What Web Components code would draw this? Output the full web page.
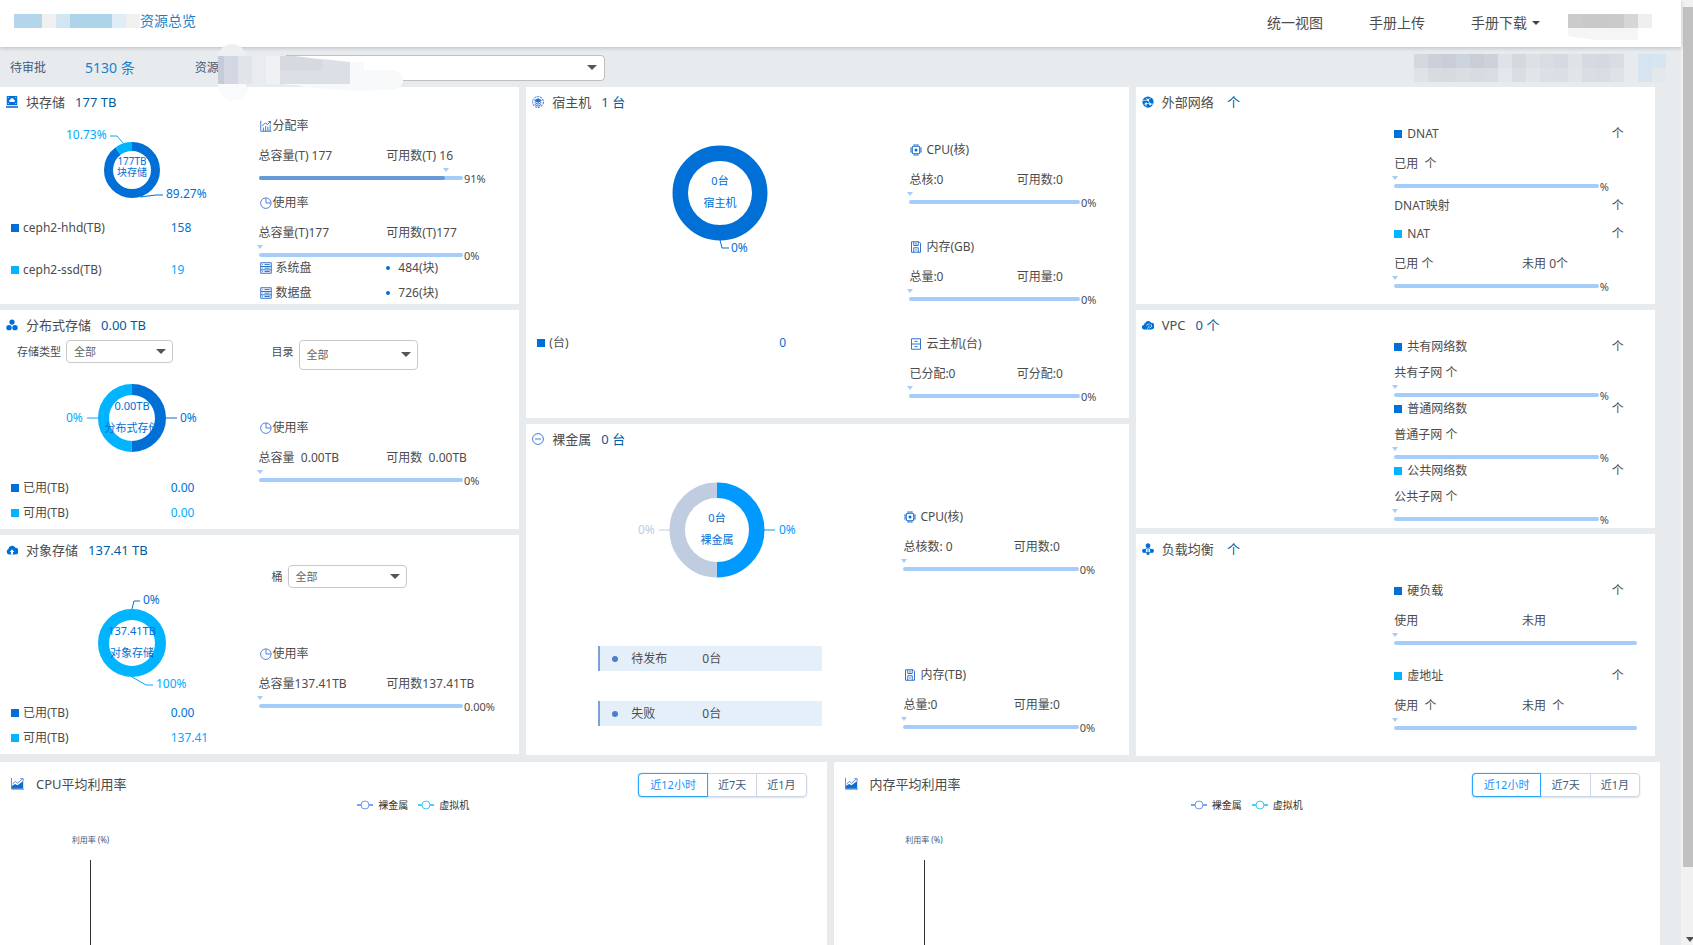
<!DOCTYPE html>
<html lang="zh-CN">
<head>
<meta charset="utf-8">
<title>资源总览</title>
<style>
body{margin:0;background:#e7ebee;color:#4c4c4c;font:12px/20px "Noto Sans","Noto Sans CJK SC",sans-serif}
</style>
</head>
<body>
<app-shell>
  <top-bar slot="top"></top-bar>
  <filter-bar slot="top"></filter-bar>
  <dash-board>
    <dash-column slot="a" class="c1">
      <resource-card icon="disk" name="块存储" value="177 TB">
        <ring-chart slot="left" spec='{"w":260,"h":92,"cx":132,"cy":55,"r":28,"i":19,"fs":10,"seg":[[89.27,"#006fd6"],[10.73,"#00b4ff"]],"mid":[[47,"177TB"],[58,"块存储"]],"lab":[{"x":66,"y":20,"t":"10.73%","c":"#00aaff","p":"M123 28L117 21H110"},{"x":166,"y":79,"t":"89.27%","c":"#006fd6","p":"M140 82L156 80H163"}]}'></ring-chart>
        <legend-row slot="left" class="tall" name="ceph2-hhd(TB)" value="158"></legend-row>
        <legend-row slot="left" class="tall light" name="ceph2-ssd(TB)" value="19"></legend-row>
        <usage-gauge slot="right" icon="chart" name="分配率" a="总容量(T) 177" b="可用数(T) 16" pct="91" unit="91%"></usage-gauge>
        <usage-gauge slot="right" icon="pie" name="使用率" a="总容量(T)177" b="可用数(T)177" unit="0%"></usage-gauge>
        <disk-list slot="right"></disk-list>
      </resource-card>
      <resource-card class="f2" icon="nodes" name="分布式存储" value="0.00 TB">
        <select-field slot="filter-a" class="s" name="存储类型"></select-field>
        <select-field slot="filter-b" class="l" name="目录"></select-field>
        <ring-chart slot="left" spec='{"w":260,"h":105,"cx":132,"cy":48,"r":34,"i":23,"fs":11,"seg":[[50,"#006fd6"],[50,"#00b4ff"]],"mid":[[36,"0.00TB"],[58,"分布式存储"]],"lab":[{"x":66,"y":48,"t":"0%","c":"#00aaff","p":"M98 48H87"},{"x":180,"y":48,"t":"0%","c":"#006fd6","p":"M166 48H177"}]}'></ring-chart>
        <legend-row slot="left" name="已用(TB)" value="0.00"></legend-row>
        <legend-row slot="left" class="light" name="可用(TB)" value="0.00"></legend-row>
        <usage-gauge slot="right" icon="pie" name="使用率" a="总容量  0.00TB" b="可用数  0.00TB" unit="0%"></usage-gauge>
      </resource-card>
      <resource-card class="f3" icon="cloud" name="对象存储" value="137.41 TB">
        <select-field slot="filter-b" class="m" name="桶"></select-field>
        <ring-chart slot="left" spec='{"w":260,"h":105,"cx":132,"cy":48,"r":34,"i":23,"fs":11,"seg":[[100,"#00b4ff"]],"mid":[[36,"137.41TB"],[58,"对象存储"]],"lab":[{"x":143,"y":5,"t":"0%","c":"#006fd6","p":"M132 14L134 6H140"},{"x":156,"y":89,"t":"100%","c":"#00aaff","p":"M132 82L146 90H153"}]}'></ring-chart>
        <legend-row slot="left" name="已用(TB)" value="0.00"></legend-row>
        <legend-row slot="left" class="light" name="可用(TB)" value="137.41"></legend-row>
        <usage-gauge slot="right" icon="pie" name="使用率" a="总容量137.41TB" b="可用数137.41TB" unit="0.00%"></usage-gauge>
      </resource-card>
    </dash-column>
    <dash-column slot="b" class="c2">
      <resource-card class="host" icon="host" name="宿主机" value="1 台">
        <ring-chart slot="left" spec='{"w":380,"h":215,"cx":194,"cy":78,"r":47.5,"i":32,"fs":11,"seg":[[100,"#006fd6"]],"mid":[[66,"0台"],[88,"宿主机"]],"lab":[{"x":205,"y":133,"t":"0%","c":"#006fd6","p":"M194 125L196 133H203"}]}'></ring-chart>
        <legend-row slot="left" name="(台)" value="0"></legend-row>
        <usage-gauge slot="right" class="wide" icon="cpu" name="CPU(核)" a="总核:0" b="可用数:0" unit="0%"></usage-gauge>
        <usage-gauge slot="right" class="wide" icon="save" name="内存(GB)" a="总量:0" b="可用量:0" unit="0%"></usage-gauge>
        <usage-gauge slot="right" class="wide" icon="cabinet" name="云主机(台)" a="已分配:0" b="可分配:0" unit="0%"></usage-gauge>
      </resource-card>
      <resource-card class="metal" icon="minus" name="裸金属" value="0 台">
        <ring-chart slot="left" spec='{"w":374,"h":164,"cx":191,"cy":78,"r":47.5,"i":32,"fs":11,"seg":[[50,"#0099ff"],[50,"#c0ccdf"]],"mid":[[66,"0台"],[88,"裸金属"]],"lab":[{"x":112,"y":78,"t":"0%","c":"#c0ccdf","p":"M144 78H133"},{"x":253,"y":78,"t":"0%","c":"#0099ff","p":"M238 78H249"}]}'></ring-chart>
        <status-row slot="left" name="待发布" value="0台"></status-row>
        <status-row slot="left" name="失败" value="0台"></status-row>
        <usage-gauge slot="right" class="wide" icon="cpu" name="CPU(核)" a="总核数: 0" b="可用数:0" unit="0%"></usage-gauge>
        <usage-gauge slot="right" class="wide" icon="save" name="内存(TB)" a="总量:0" b="可用量:0" unit="0%"></usage-gauge>
      </resource-card>
    </dash-column>
    <dash-column slot="c" class="c3">
      <resource-card class="net" icon="globe" name="外部网络" value=" 个">
        <usage-gauge slot="right" mark="#006fd6" name="DNAT" count="个" a="已用  个" b="" unit="%"></usage-gauge>
        <count-row slot="right" name="DNAT映射" value="个"></count-row>
        <usage-gauge slot="right" mark="#00b4ff" name="NAT" count="个" a="已用 个" b="未用 0个" unit="%"></usage-gauge>
      </resource-card>
      <resource-card class="vpc" icon="clouds" name="VPC" value="0 个">
        <usage-gauge slot="right" class="compact" mark="#006fd6" name="共有网络数" count="个" a="共有子网 个" b="" unit="%"></usage-gauge>
        <usage-gauge slot="right" class="compact" mark="#006fd6" name="普通网络数" count="个" a="普通子网 个" b="" unit="%"></usage-gauge>
        <usage-gauge slot="right" class="compact" mark="#00b4ff" name="公共网络数" count="个" a="公共子网 个" b="" unit="%"></usage-gauge>
      </resource-card>
      <resource-card class="lb" icon="balance" name="负载均衡" value=" 个">
        <usage-gauge slot="right" class="full" mark="#006fd6" name="硬负载" count="个" a="使用" b="未用" unit=""></usage-gauge>
        <usage-gauge slot="right" class="full" mark="#00b4ff" name="虚地址" count="个" a="使用  个" b="未用  个" unit=""></usage-gauge>
      </resource-card>
    </dash-column>
  </dash-board>
  <trend-panel slot="trends" name="CPU平均利用率"></trend-panel>
  <trend-panel slot="trends" name="内存平均利用率"></trend-panel>
</app-shell>

<script>
const define = (tag, render) => customElements.define(tag, class extends HTMLElement {
  constructor() {
    super();
    this.attachShadow({ mode: 'open' });
  }
  connectedCallback() {
    const t = document.createElement('template');
    t.innerHTML = render(n => this.getAttribute(n) ?? '');
    this.shadowRoot.replaceChildren(t.content.cloneNode(true));
  }
});

const ICONS = {
  disk: '<path fill="#006fd6" d="M1 0h14v12H1z"/><path fill="#4a86e0" d="M0 13h16v3H0z"/><circle cx="3" cy="2" r=".7" fill="#fff"/><circle cx="13" cy="2" r=".7" fill="#fff"/><circle cx="3" cy="10" r=".7" fill="#fff"/><circle cx="13" cy="10" r=".7" fill="#fff"/><path fill="#fff" d="M5 8a1.600 1.600 0 0 1 .6-3A2.600 2.600 0 0 1 10.600 5a1.600 1.600 0 0 1 .4 3z"/>',
  nodes: '<g fill="#006fd6"><circle cx="8" cy="4" r="3.500"/><circle cx="4" cy="11.500" r="3.600"/><circle cx="12" cy="11.500" r="3.600"/></g>',
  cloud: '<path fill="#006fd6" d="M4 14a4 4 0 0 1-.8-7.500A5 5 0 0 1 12.500 5 4.500 4.500 0 0 1 12 14z"/><path fill="#fff" d="M8 7l3 3.500H9.300V14H6.700v-3.500H5z"/>',
  host: '<g fill="none" stroke="#2b6fd0" stroke-width="1.300"><circle cx="8" cy="8" r="7.200" stroke-dasharray="3 1"/><path d="M3.500 6L8 3.500 12.500 6 8 8.500zM3.500 8.500L8 11l4.500-2.500M3.500 11L8 13.500l4.500-2.500"/></g><path fill="#2b6fd0" d="M3.500 6L8 3.500 12.500 6 8 8.500z"/>',
  minus: '<g fill="none" stroke="#2b6fd8" stroke-width="1.200"><circle cx="8" cy="8" r="7.200"/><path d="M4 8h8"/></g>',
  globe: '<circle cx="8" cy="8" r="7.500" fill="#006fd6"/><g fill="none" stroke="#fff" stroke-width="1"><path d="M1 6c3-1 4 1 7-1s3-3 5-3M5 3l3 2 3 6M2 12c3-3 6-2 13-1M5 14l1-4"/></g><g fill="#fff"><circle cx="8" cy="5" r="1.500"/><circle cx="11" cy="11" r="1.500"/><circle cx="5.500" cy="10" r="1.200"/></g>',
  clouds: '<path fill="#006fd6" d="M3 14a3 3 0 0 1-.3-6A3.500 3.500 0 0 1 5 4.500 4 4 0 0 1 12 5a4.500 4.500 0 0 1 .5 9z"/><g fill="none" stroke="#fff"><path d="M6 9a3 3 0 0 1 4-2M7 13l3-4M12 7l1 3-3 2"/></g>',
  balance: '<path d="M8 4L3 11l5 3 5-3zM8 4v10" fill="none" stroke="#006fd6" stroke-width="1.200"/><g fill="#006fd6"><path d="M8 0l3 2v3L8 7 5 5V2z"/><circle cx="2.800" cy="10.500" r="2.700"/><circle cx="13.200" cy="10.500" r="2.700"/><circle cx="8" cy="14" r="2"/></g>',
  chart: '<g fill="none" stroke="#2b6fd0" stroke-width="1.200"><path d="M1 1v14h14"/><path d="M3 8l4-4 3 2 4-4M11 2h3v3"/><path d="M4.500 10v5M7.500 8v7M10.500 9v6M13.500 6v9"/></g>',
  pie: '<g fill="none" stroke="#3f73d8" stroke-width="1.200"><path d="M8 1.500V8h6.500"/><circle cx="7.800" cy="8.200" r="7"/></g>',
  cpu: '<rect x="3" y="3" width="10" height="10" rx="2" fill="none" stroke="#1d6fd0" stroke-width="1.500"/><circle cx="8" cy="8" r="2" fill="#006fd6"/><path stroke="#1d6fd0" stroke-width="1.200" d="M5.500 0v3M8 0v3M10.500 0v3M5.500 13v3M8 13v3M10.500 13v3M0 5.500h3M0 8h3M0 10.500h3M13 5.500h3M13 8h3M13 10.500h3"/>',
  save: '<g fill="none" stroke="#2b6fd0" stroke-width="1.300"><path d="M2 1h10l2 2v12H2z"/><path d="M5 1v5h6V1M8 2v3M5 15V9h6v6M7 12h2"/></g>',
  cabinet: '<g fill="none" stroke="#2b6fd0" stroke-width="1.300"><path d="M2 1h12v14H2zM2 8h12M6 4.500h4M6 11.500h4"/></g>',
  server: '<g fill="none" stroke="#2b6fd0" stroke-width="1.300"><path d="M1 1h14v14H1zM1 6h14M1 10.500h14M6 3.500h7M6 8.200h7M6 12.700h7M3 3.500h1M3 8.200h1M3 12.700h1"/></g>',
  trend: '<path fill="#0a6fd0" d="M1 14.500V11l4-2.500 3 1.500 7-5v9.500z"/><path fill="none" stroke="#5a7fc8" stroke-width="1.100" d="M.6 1v14H16M2 8.500l3.500-3L8 7.500l6-5M11.500 2H15v3"/>'
};
const icon = n => `<svg class="ic" viewBox="0 0 16 16" aria-hidden="true">${ICONS[n] || ''}</svg>`;
const cells = (x, y, w, h, list) => list.map((c, i) => c ? `<rect x="${x + i * w}" y="${y}" width="${w}" height="${h}" fill="${c}"/>` : '').join('');

define('app-shell', () => `<style>
  :host{display:grid;grid-template-columns:minmax(0,1fr) 12px;min-height:100vh}
  .page{display:flex;flex-direction:column}
  .trends{flex:1;display:grid;grid-template-columns:1fr 1fr;gap:7px;padding-right:21px;margin-top:6px}
  .bar{background:#f1f1f1;display:flex;flex-direction:column;padding-left:2px}
  .bar i{display:block}
  .thumb{flex:0 0 91%;background:#c1c1c1;margin-top:7px}
  .down{margin:auto 2px 3px 3px;border:4px solid transparent;border-top:5px solid #505050;border-bottom:0;width:0}
</style>
<div class="page"><slot name="top"></slot><slot></slot><section class="trends"><slot name="trends"></slot></section></div>
<div class="bar" aria-hidden="true"><i class="thumb"></i><i class="down"></i></div>`);

define('top-bar', () => `<style>
  :host{display:block;background:#fff;box-shadow:0 1px 4px #0003;position:relative;height:47px}
  header{display:flex;align-items:center;height:46px;padding:0 29px 0 14px;font-size:14px}
  h1{font:inherit;color:#1a7fc9;margin:0 auto 4px 0}
  .ma{display:block;margin:0 0 4px 0}
  nav{display:flex;gap:46px;align-items:center}
  a{color:inherit;text-decoration:none;display:flex;align-items:center;gap:5px}
  a i{border:4px solid transparent;border-top-color:#444;border-bottom:0}
  .user{margin:7px 0 0 28px}
</style>
<header>
  <svg class="ma" width="126" height="14" aria-hidden="true"><path fill="#b3d6ec" d="M0 0h28v14H0z"/><path fill="#f0f0f0" d="M28 0h14v14H28z"/><path fill="#d2e5f2" d="M42 0h14v14H42z"/><path fill="#aed4ea" d="M56 0h42v14H56z"/><path fill="#e0edf7" d="M98 0h14v14H98z"/><path fill="#f0f0f0" d="M112 0h14v14h-14z"/></svg>
  <h1>资源总览</h1>
  <nav><a href="#view">统一视图</a><a href="#upload">手册上传</a><a href="#download">手册下载<i></i></a></nav>
  <svg class="user" width="84" height="26" aria-hidden="true">${cells(0,0,14,14,['#cbcbcb','#c9c9c9','#c9c9c9','#cacaca','#d6d6d6','#efefef'])}<path fill="#f5f5f5" d="M0 14h70v12H28L0 22z"/></svg>
</header>`);

define('filter-bar', () => `<style>
  :host{display:block;position:relative;padding-top:2px}
  .row{display:flex;align-items:center;height:38px;padding:0 15px 0 10px;color:#44597a}
  a{font-size:14px;color:#1a7fc9;text-decoration:none;margin:0 60px 0 39px}
  .sel{position:relative;margin-left:50px;width:336px}
  .sel::after{content:"";position:absolute;right:8px;top:10px;border:5px solid transparent;border-top-color:#555;border-bottom:0;pointer-events:none}
  select{appearance:none;width:100%;height:26px;box-sizing:border-box;background:#fff;border:1px solid #bfbfbf;border-radius:4px;display:block}
  .right{margin-left:auto;display:block}
  .smudge{position:absolute;left:212px;top:-6px}
</style>
<div class="row"><span>待审批</span><a href="#pending">5130 条</a><label for="res">资源</label>
<span class="sel"><select id="res" aria-label="资源"><option></option></select></span>
<svg class="right" width="252" height="28" aria-hidden="true">${cells(0,0,14,14,['#d5d9df','#cbd0db','#c8cdd8','#cdd4dd','#c9cdd8','#cdd1da','#dfe3e8','#d3d9df','#dde1e6','#d7dde2','#d6dae0','#dfe3e7','#d5d9e0','#d3d8e1','#d9dde1','','#d5e4f1','#d6e5f2'])}${cells(0,14,14,14,['#dfe2e6','#d8dce1','#d7dbe0','#dadee3','#d8dce2','#d9dde2','#e3e6ea','#d9dee2','#e1e4e8','#dce0e5','#dbdfe4','#e1e4e8','#dadee3','#d9dde3','#dee1e5','','#d7e4f0','#e3e8ed'])}</svg></div>
<svg class="smudge" width="200" height="60" aria-hidden="true">
  <path fill="#edeff1" d="M6 17a14 14 0 0 1 28 0v12H6z"/><path fill="#f8fafc" d="M6 40h31v4a15 15 0 0 1-31 0z"/>
  <path fill="#e9ecee" d="M34 14h40v32H34z"/>
  ${cells(12,15,14,28,['#d2d7e1','#e1e5e9'])}<path fill="#c5ccd7" d="M6 15h6v28H6z"/>
  <path fill="#f7f9fa" d="M74 29h106a11 10 0 0 1 0 20c-40 1-70 1-95-5H74z"/>
  <path fill="#eff1f4" d="M54 15h14v28H54z"/><path fill="#d6d9e0" d="M68 15h14l42 5v23H68z"/><path fill="#dcdfe5" d="M68 29h70v14H68zM110 18l28 3v8h-28z"/><path fill="#f8f9fb" d="M138 21h14v22h-14z"/>
</svg>`);

define('dash-board', () => `<style>
  :host{display:grid;grid-template-columns:519fr 602fr 519fr;gap:7px;padding-right:26px;min-height:669px}
</style><slot name="a"></slot><slot name="b"></slot><slot name="c"></slot>`);

define('dash-column', () => `<style>
  :host{display:grid;gap:6px;min-width:0}
  :host(.c1){grid-template-rows:217fr 219fr 219fr;padding-bottom:2px}
  :host(.c2){grid-template-rows:1fr 1fr;padding-bottom:1px}
  :host(.c3){grid-template-rows:217fr 218fr 222fr}
</style><slot></slot>`);

define('resource-card', a => `<style>
  :host{display:block;background:#fff;--split:49.800%;--top:1px;--gap:9px}
  :host(.f2){--top:48px}
  :host(.f3){--top:49px}
  :host(.host){--split:63.600%;--top:25px;--gap:29px}
  :host(.metal){--split:62.600%;--top:55px;--gap:90px;--lgap:30px}
  :host(.net){--top:9px;--gap:0px}
  :host(.vpc){--gap:0px}
  :host(.lb){--top:19px;--gap:17px}
  h2{display:flex;align-items:center;height:26px;margin:0;padding:2px 0 0 6px;font-size:13px;font-weight:400}
  .ic{width:12px;height:12px;margin-right:8px}
  .v{color:#005c9f;margin-left:10px;white-space:pre}
  .grid{display:grid;grid-template-columns:var(--split) minmax(0,1fr)}
  .filters{display:none;height:30px;margin-top:2px}
  :host(.f2) .filters,:host(.f3) .filters{display:grid}
  .l,.r{display:flex;flex-direction:column}
  .l{gap:var(--lgap,0px)}
  .r{padding-top:var(--top);gap:var(--gap)}
  .fa{padding-left:17px}.fb{padding-left:13px}
</style>
<h2>${icon(a('icon'))}<span>${a('name')}</span><span class="v">${a('value')}</span></h2>
<div class="grid filters"><div class="fa"><slot name="filter-a"></slot></div><div class="fb"><slot name="filter-b"></slot></div></div>
<div class="grid"><div class="l"><slot name="left"></slot></div><div class="r"><slot name="right"></slot></div></div>`);

define('select-field', a => `<style>
  :host{display:flex;gap:5px;font-size:11px;line-height:23px;--w:119px;--h:23px}
  :host(.s){--w:107px}
  :host(.l){--h:30px}
  span{position:relative;width:var(--w)}
  span::after{content:"";position:absolute;right:7px;top:calc(var(--h) / 2 - 3px);border:5px solid transparent;border-top-color:#555;border-bottom:0;pointer-events:none}
  select{appearance:none;display:block;width:100%;height:var(--h);box-sizing:border-box;border:1px solid #c9c9c9;border-radius:4px;background:#fff;font:inherit;line-height:20px;color:#666;padding:0 8px 0 7px}
</style><label for="s">${a('name')}</label><span><select id="s"><option>全部</option></select></span>`);

define('ring-chart', a => {
  const s = JSON.parse(a('spec')), R = (s.r + s.i) / 2, C = 2 * Math.PI * R;
  let at = 0;
  const arcs = s.seg.map(([p, c]) => {
    const d = `<circle cx="${s.cx}" cy="${s.cy}" r="${R}" fill="none" stroke="${c}" stroke-width="${s.r - s.i}" stroke-dasharray="${C * p / 100} ${C}" stroke-dashoffset="${-C * at / 100}" transform="rotate(-90 ${s.cx} ${s.cy})"/>`;
    at += p;
    return d;
  }).join('');
  return `<style>:host{display:block}svg{display:block;overflow:visible}text{dominant-baseline:central;font-size:12px}.mid{fill:#006fd6;text-anchor:middle;font-size:${s.fs}px}</style>
  <svg width="${s.w}" height="${s.h}">${arcs}${s.mid.map(([y, t]) => `<text class="mid" x="${s.cx}" y="${y - 1}">${t}</text>`).join('')}${s.lab.map(l => `<path d="${l.p}" fill="none" stroke="${l.c}"/><text x="${l.x}" y="${l.y - 1}" fill="${l.c}">${l.t}</text>`).join('')}</svg>`;
});

define('legend-row', a => `<style>
  :host{display:flex;align-items:center;height:25px;--c:#006fd6;--t:#006fd6}
  :host(.tall){height:42px}
  :host(.light){--c:#00b4ff;--t:#00aaff}
  .n{flex:0 0 66%;box-sizing:border-box;padding-left:11px;display:flex;align-items:center;gap:4px}
  .n::before{content:"";width:8px;height:8px;background:var(--c)}
  .v{color:var(--t)}
</style><span class="n">${a('name')}</span><span class="v">${a('value')}</span>`);

define('status-row', a => `<style>
  :host{display:flex;align-items:center;height:25px;width:224px;box-sizing:border-box;margin-left:72px;background:#e5effa;border-left:2px solid #7f9fd8;padding-left:12px}
  :host::before{content:"";width:6px;height:6px;border-radius:50%;background:#4a7fd0;margin-right:13px}
  .n{width:71px}
</style><span class="n">${a('name')}</span><span>${a('value')}</span>`);

define('count-row', a => `<style>
  :host{display:flex;justify-content:space-between;padding:4px 12% 8px 0}
</style><span>${a('name')}</span><span>${a('value')}</span>`);

define('usage-gauge', a => {
  const pct = +a('pct');
  return `<style>
  :host{display:block;--bar:78.400%;--hh:20px;--gap:10px}
  :host(.compact){--hh:15px;--gap:9px}
  :host(.full){--bar:93%}
  :host(.wide){--bar:77.800%}
  .h{display:flex;align-items:center;height:var(--hh);margin-bottom:var(--gap);padding-right:12%}
  .ic{width:12px;height:12px;margin:0 1px 0 1px}
  :host(.wide) .ic{margin-right:4px}
  .sq{width:8px;height:8px;margin-right:5px}
  .c{margin-left:auto}
  .t{display:grid;grid-template-columns:49% 1fr;white-space:pre;height:20px}
  .m{width:var(--bar);height:4px;margin-top:2px}
  .m i{display:block;width:0;margin-left:calc(${pct}% - 2px);border:3px solid transparent;border-top:4px solid #a3cdfb;border-bottom:0}
  .b{display:flex;align-items:center;height:12px;gap:1px;font-size:11px;line-height:12px}
  .track{flex:0 0 var(--bar);height:4px;border-radius:2px;background:#a5cdfa}
  .track i{display:block;height:4px;width:${pct}%;border-radius:2px;background:#659ad9}
  .u{padding-top:2px}
</style>
<div class="h">${a('mark') ? `<i class="sq" style="background:${a('mark')}"></i>` : icon(a('icon'))}<span>${a('name')}</span><span class="c">${a('count')}</span></div>
<div class="t"><span>${a('a')}</span><span>${a('b')}</span></div>
<div class="m"><i></i></div>
<div class="b"><div class="track"><i></i></div><span class="u">${a('unit')}</span></div>`;
});

define('disk-list', () => `<style>
  :host{display:grid;gap:11px;line-height:14px;margin-top:-9px}
  div{display:grid;grid-template-columns:49% 1fr;align-items:center}
  span{display:flex;align-items:center}
  .ic{width:12px;height:12px;margin:0 4px 0 1px}
  .v::before{content:"";width:4px;height:4px;border-radius:50%;background:#006fd6;margin-right:8px}
</style>
<div><span>${icon('server')}系统盘</span><span class="v">484(块)</span></div>
<div><span>${icon('server')}数据盘</span><span class="v">726(块)</span></div>`);

define('trend-panel', a => `<style>
  :host{display:flex;flex-direction:column;background:#fff;min-height:183px}
  .head{display:flex;align-items:center;padding:11px 20px 0 11px}
  h2{font-size:13px;font-weight:400;margin:0 auto 3px 0;display:flex;align-items:center}
  .ic{width:13px;height:13px;margin-right:12px}
  .g{display:flex;box-shadow:0 1px 2px #0002;border-radius:4px}
  button{font:inherit;font-size:11px;line-height:22px;padding:0 10px;background:#fff;border:1px solid #cbd6e6;color:#44597a;margin-left:-1px}
  button:first-child{padding:0 11px;border-color:#2aa5ff;color:#1890ff;border-radius:4px 0 0 4px;box-shadow:0 0 1px #2aa5ff;position:relative;margin:0}
  button:last-child{border-radius:0 4px 4px 0}
  .lg{display:flex;justify-content:center;gap:10px;font-size:10px;line-height:16px;color:#333}
  .lg span{display:flex;align-items:center;gap:5px}
  .y{width:181px;text-align:center;font-size:8px;line-height:12px;color:#44597a;padding-top:21px}
  .axis{flex:1;margin:14px 0 0 90px;border-left:1px solid #333}
</style>
<div class="head"><h2>${icon('trend')}${a('name')}</h2><div class="g"><button>近12小时</button><button>近7天</button><button>近1月</button></div></div>
<div class="lg"><span><svg width="16" height="10"><path d="M0 5h16" stroke="#7aa2f7" stroke-width="2"/><circle cx="8" cy="5" r="4" fill="#fff" stroke="#6a96f5"/></svg>裸金属</span><span><svg width="16" height="10"><path d="M0 5h16" stroke="#4cd0fa" stroke-width="2"/><circle cx="8" cy="5" r="4" fill="#fff" stroke="#3cc8fa"/></svg>虚拟机</span></div>
<div class="y">利用率 (%)</div><div class="axis"></div>`);
</script>
</body>
</html>
